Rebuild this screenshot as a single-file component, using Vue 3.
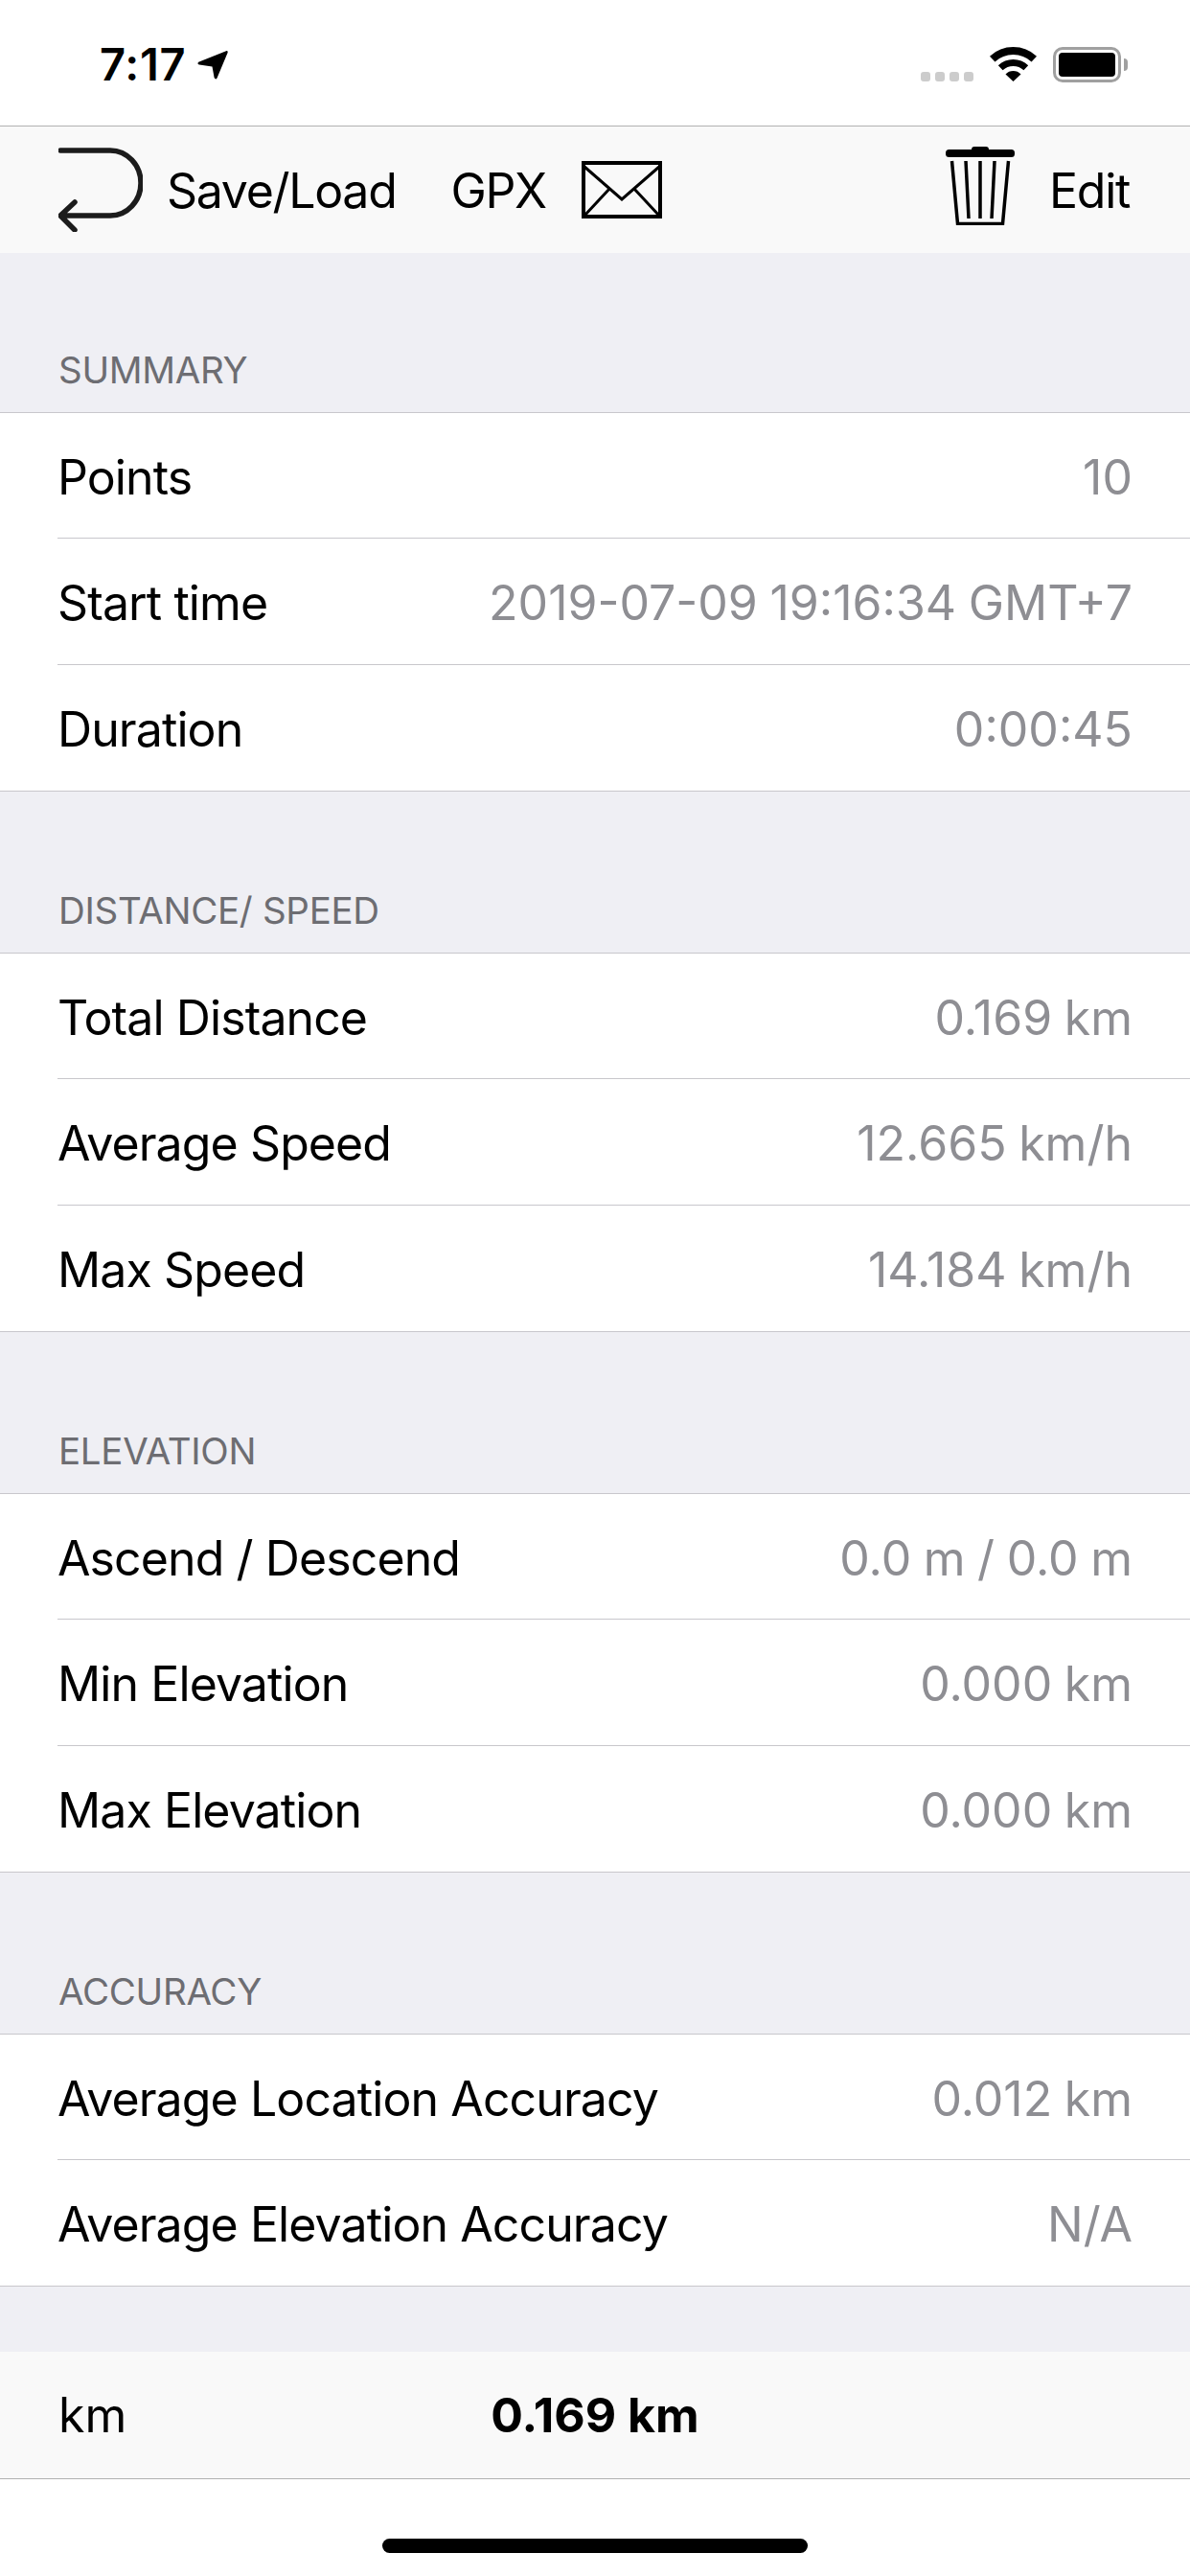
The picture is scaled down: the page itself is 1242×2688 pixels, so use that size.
<script setup>
const sections = [
  {
    title: "SUMMARY",
    rows: [
      { label: "Points", value: "10" },
      { label: "Start time", value: "2019-07-09 19:16:34 GMT+7" },
      { label: "Duration", value: "0:00:45" },
    ],
  },
  {
    title: "DISTANCE/ SPEED",
    rows: [
      { label: "Total Distance", value: "0.169 km" },
      { label: "Average Speed", value: "12.665 km/h" },
      { label: "Max Speed", value: "14.184 km/h" },
    ],
  },
  {
    title: "ELEVATION",
    rows: [
      { label: "Ascend / Descend", value: "0.0 m / 0.0 m" },
      { label: "Min Elevation", value: "0.000 km" },
      { label: "Max Elevation", value: "0.000 km" },
    ],
  },
  {
    title: "ACCURACY",
    rows: [
      { label: "Average Location Accuracy", value: "0.012 km" },
      { label: "Average Elevation Accuracy", value: "N/A" },
    ],
  },
];
</script>

<template>
  <div class="screen">
    <div class="status-bar">
      <div class="clock">
        <span>7:17</span>
        <svg class="loc" width="32" height="31" viewBox="0 0 32 31">
          <path d="M30 1.2 Q32 0.6 31.6 3 L20.5 29.5 Q19 31.5 17.6 29 L15.5 17.6 L2 15.6 Q-0.6 14.6 1.2 12.8 Z" fill="#000" />
        </svg>
      </div>
      <div class="status-right">
        <div class="dots">
          <i></i><i></i><i></i><i></i>
        </div>
        <svg class="wifi" width="49" height="36" viewBox="0 0 49 36">
          <path d="M2.7 12.6 A32 32 0 0 1 46.3 12.6" fill="none" stroke="#000" stroke-width="8" />
          <path d="M11.2 21.7 A19.5 19.5 0 0 1 37.8 21.7" fill="none" stroke="#000" stroke-width="7" />
          <path d="M24.5 36 L16.5 28.5 A11 11 0 0 1 32.5 28.5 Z" fill="#000" />
        </svg>
        <div class="battery">
          <div class="battery-body"><div class="battery-fill"></div></div>
          <div class="battery-cap"></div>
        </div>
      </div>
    </div>

    <div class="toolbar">
      <div class="tool-left">
        <svg class="back" width="88" height="88" viewBox="0 0 88 88">
          <path
            d="M2 3 H54 A32 34 0 0 1 54 71 H2 M17 57 L2 71 L17 86"
            fill="none"
            stroke="#1c1c1c"
            stroke-width="5.5"
            stroke-linecap="round"
            stroke-linejoin="round"
          />
        </svg>
        <span class="save">Save/Load</span>
        <span class="gpx">GPX</span>
        <svg class="mail" width="84" height="60" viewBox="0 0 84 60">
          <rect x="2" y="2" width="80" height="56" fill="none" stroke="#000" stroke-width="4" />
          <path d="M3 6 L42 40 L81 6 M3 57 L30 28 M81 57 L54 28" fill="none" stroke="#000" stroke-width="3" />
        </svg>
      </div>
      <div class="tool-right">
        <svg class="trash" width="72" height="82" viewBox="0 0 72 82">
          <rect x="0" y="3" width="72" height="8" rx="3.5" fill="#000" />
          <rect x="27" y="0" width="18" height="6" rx="3" fill="#000" />
          <path d="M6.5 15 L12.5 80.5 H59.5 L65.5 15" fill="none" stroke="#000" stroke-width="3.5" />
          <path d="M21 15 L24 75 M36 15 V75 M51 15 L48 75" fill="none" stroke="#000" stroke-width="3.5" />
        </svg>
        <span class="edit">Edit</span>
      </div>
    </div>

    <section v-for="section in sections" :key="section.title" class="section">
      <div class="section-title">{{ section.title }}</div>
      <div class="rows">
        <div v-for="row in section.rows" :key="row.label" class="row">
          <span class="row-label">{{ row.label }}</span>
          <span class="row-value">{{ row.value }}</span>
        </div>
      </div>
    </section>

    <div class="total-bar">
      <span class="total-unit">km</span>
      <span class="total-value">0.169 km</span>
    </div>

    <div class="home-area">
      <div class="home-indicator"></div>
    </div>
  </div>
</template>

<style>
html,
body {
  margin: 0;
  background: #fff;
}
</style>

<style scoped>
.screen {
  width: 1242px;
  height: 2688px;
  overflow: hidden;
  background: #efeff4;
  font-family: Inter, "Liberation Sans", sans-serif;
  color: #000;
}

.status-bar {
  height: 131px;
  box-sizing: border-box;
  background: #fff;
  display: flex;
  justify-content: space-between;
  padding: 49px 65px 0 104px;
}
.clock {
  display: flex;
  align-items: flex-start;
  font-size: 47px;
  font-weight: 600;
  line-height: 36px;
  letter-spacing: 0.7px;
}
.loc {
  margin: 3px 0 0 12px;
}
.status-right {
  display: flex;
  align-items: flex-start;
}
.dots {
  display: flex;
  gap: 5px;
  margin-top: 26px;
}
.dots i {
  width: 10px;
  height: 10px;
  border-radius: 3px;
  background: #cccccc;
}
.wifi {
  margin-left: 17px;
}
.battery {
  display: flex;
  align-items: center;
  margin-left: 17px;
}
.battery-body {
  width: 71px;
  height: 37px;
  box-sizing: border-box;
  border: 3px solid #a0a0a0;
  border-radius: 10px;
  padding: 3px;
}
.battery-fill {
  width: 100%;
  height: 100%;
  background: #000;
  border-radius: 4px;
}
.battery-cap {
  width: 4px;
  height: 13px;
  margin-left: 3px;
  background: #a0a0a0;
  border-radius: 0 7px 7px 0;
}

.toolbar {
  height: 133px;
  box-sizing: border-box;
  border-top: 1px solid #b2b2b2;
  background: #f9f9f9;
  display: flex;
  justify-content: space-between;
  align-items: flex-start;
  padding: 0 63px 0 61px;
  font-size: 50px;
  line-height: 60px;
  letter-spacing: -1.3px;
}
.tool-left,
.tool-right {
  display: flex;
  align-items: flex-start;
}
.back {
  margin-top: 22px;
}
.save {
  margin: 37px 0 0 25px;
}
.gpx {
  margin: 37px 0 0 57px;
}
.mail {
  margin: 36px 0 0 37px;
}
.trash {
  margin-top: 21px;
}
.edit {
  margin: 37px 0 0 36px;
}

.section-title {
  height: 169px;
  box-sizing: border-box;
  border-bottom: 1px solid #c8c7cc;
  padding: 0 61px 20px;
  display: flex;
  align-items: flex-end;
  font-size: 38.5px;
  line-height: 48px;
  letter-spacing: -0.3px;
  color: #6d6d72;
}
.section:first-of-type .section-title {
  height: 167px;
}
.rows {
  background: #fff;
  border-bottom: 1px solid #c8c7cc;
}
.row {
  height: 132px;
  box-sizing: border-box;
  margin-left: 60px;
  padding: 3px 60px 0 0;
  display: flex;
  justify-content: space-between;
  align-items: center;
  border-bottom: 1px solid #c8c7cc;
  font-size: 50px;
}
.row:first-child {
  height: 131px;
}
.row:last-child {
  height: 131px;
  border-bottom: none;
}
.row-label {
  letter-spacing: -0.9px;
}
.row-value {
  word-spacing: -1.5px;
  color: #8e8e93;
}

.total-bar {
  height: 133px;
  margin-top: 68px;
  box-sizing: border-box;
  background: #f9f9f9;
  border-bottom: 1px solid #b2b2b2;
  padding: 0 61px;
  display: grid;
  grid-template-columns: 1fr auto 1fr;
  align-items: center;
  font-size: 50px;
}
.total-value {
  font-weight: 700;
}

.home-area {
  height: 102px;
  background: #fff;
  display: flex;
  justify-content: center;
  padding-top: 62px;
}
.home-indicator {
  width: 444px;
  height: 15px;
  border-radius: 8px;
  background: #000;
}
</style>
